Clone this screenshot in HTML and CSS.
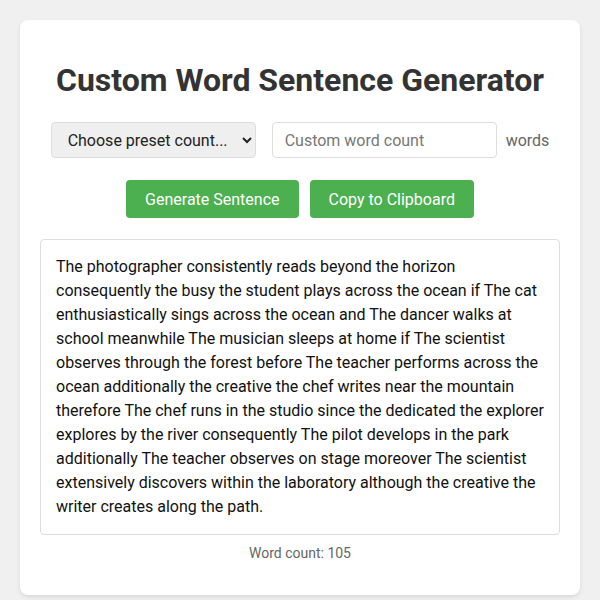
FILE: index.html
```html
<!DOCTYPE html>
<html lang="en">
<head>
<meta charset="utf-8">
<title>Custom Word Sentence Generator</title>
<link rel="stylesheet" href="styles.css">
</head>
<body>
<div class="card">
  <h1 class="title">Custom Word Sentence Generator</h1>
  <div class="controls">
    <select class="preset">
      <option>Choose preset count...</option>
    </select>
    <input class="custom" type="number" placeholder="Custom word count">
    <span class="unit">words</span>
  </div>
  <div class="actions">
    <button class="btn">Generate Sentence</button>
    <button class="btn">Copy to Clipboard</button>
  </div>
  <div class="output">The photographer consistently reads beyond the horizon consequently the busy the student plays across the ocean if The cat enthusiastically sings across the ocean and The dancer walks at school meanwhile The musician sleeps at home if The scientist observes through the forest before The teacher performs across the ocean additionally the creative the chef writes near the mountain therefore The chef runs in the studio since the dedicated the explorer explores by the river consequently The pilot develops in the park additionally The teacher observes on stage moreover The scientist extensively discovers within the laboratory although the creative the writer creates along the path.</div>
  <div class="count">Word count: 105</div>
</div>
</body>
</html>
```

FILE: styles.css
```css
html, body {
  margin: 0;
  padding: 0;
}
body {
  background: #f0f0f0;
  font-family: Roboto, "Liberation Sans", sans-serif;
  padding: 20px;
}
.card {
  background: #fff;
  border-radius: 8px;
  box-shadow: 0 2px 4px rgba(0,0,0,0.1);
  padding: 20px;
  box-sizing: border-box;
  height: 575px;
}
.title {
  font-size: 32px;
  font-weight: 700;
  color: #333;
  text-align: center;
  margin: 21px 0 23px;
}
.controls {
  display: flex;
  justify-content: center;
  align-items: center;
  gap: 16px;
}
.preset {
  width: 205px;
  height: 36px;
  font-family: inherit;
  font-size: 16px;
  color: #222;
  background: #efefef;
  border: 1px solid #ddd;
  border-radius: 4px;
  padding: 0 12px;
}
.custom {
  width: 225px;
  height: 36px;
  box-sizing: border-box;
  font-family: inherit;
  font-size: 16px;
  border: 1px solid #ddd;
  border-radius: 4px;
  padding: 0 12px;
}
.custom::placeholder {
  color: #777;
}
.unit {
  font-size: 16px;
  color: #666;
  margin-left: -7px;
}
.actions {
  display: flex;
  justify-content: center;
  gap: 11px;
  margin-top: 22px;
}
.btn {
  background: #4caf50;
  color: #fff;
  border: none;
  border-radius: 4px;
  font-family: inherit;
  font-size: 16px;
  padding: 0 19px;
  height: 38px;
}
.output {
  margin-top: 21px;
  border: 1px solid #ddd;
  border-radius: 4px;
  padding: 15px;
  font-size: 16px;
  line-height: 24px;
  color: #111;
}
.count {
  text-align: center;
  font-size: 14px;
  color: #666;
  margin-top: 10px;
}
```
